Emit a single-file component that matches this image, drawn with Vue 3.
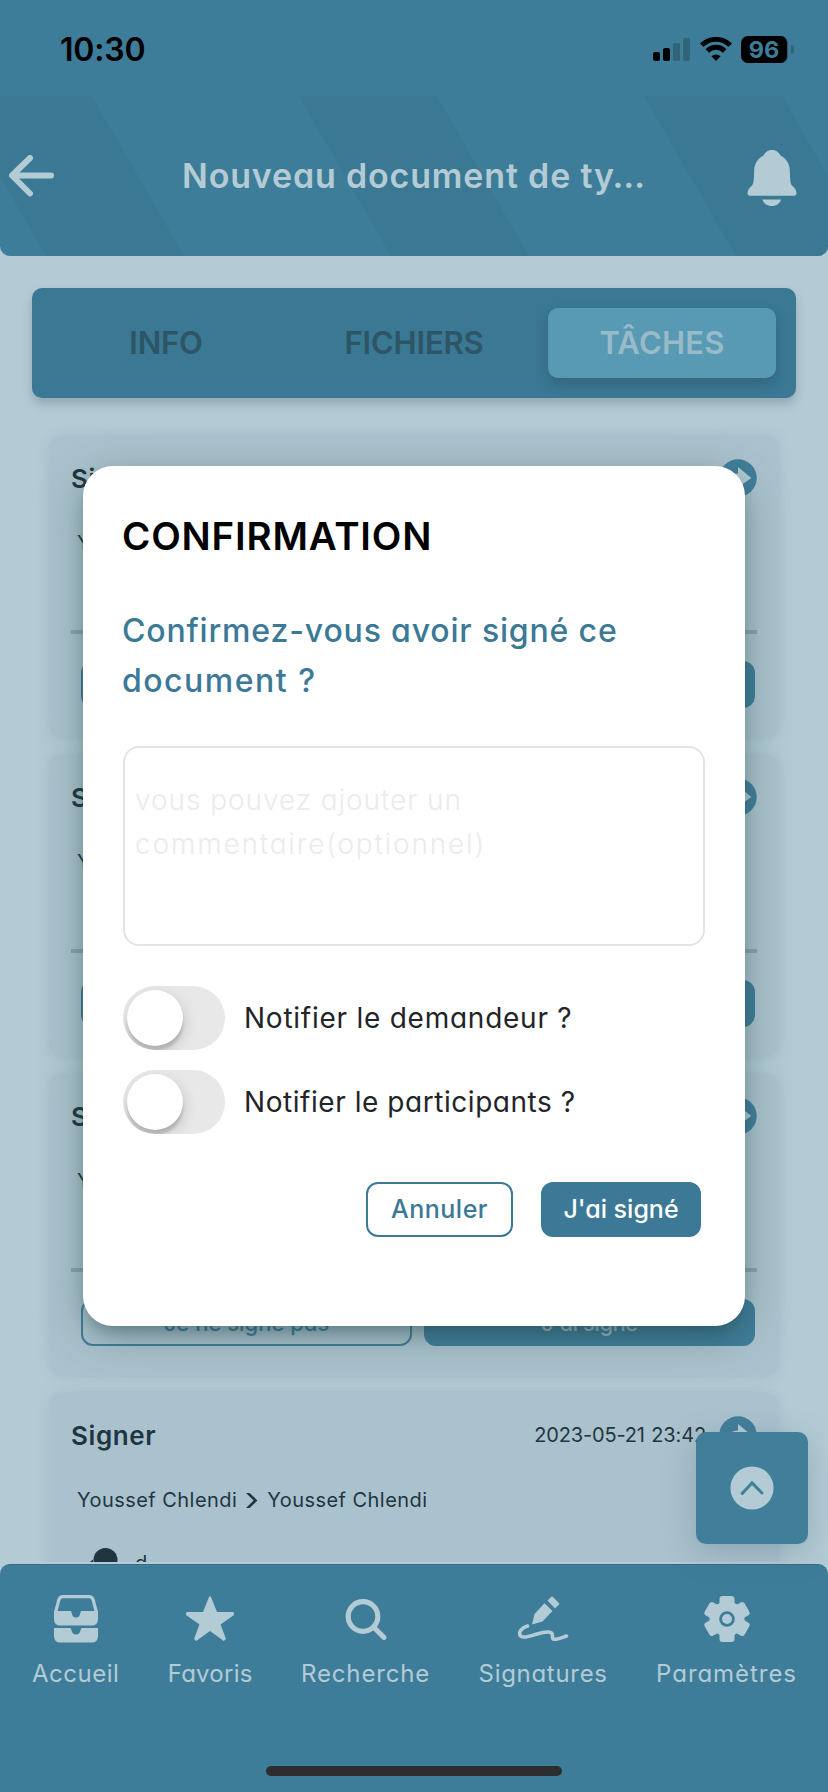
<script setup>
import { ref } from 'vue'

const tabs = [
  { id: 'info', label: 'INFO' },
  { id: 'files', label: 'FICHIERS' },
  { id: 'tasks', label: 'TÂCHES' },
]
const activeTab = ref('tasks')

const cards = [1, 2, 3, 4].map((id) => ({
  id,
  title: 'Signer',
  date: '2023-05-21 23:42',
  from: 'Youssef Chlendi',
  to: 'Youssef Chlendi',
  comment: id === 4 ? 'd' : '',
}))

const toggles = [
  { id: 'asker', label: 'Notifier le demandeur ?' },
  { id: 'members', label: 'Notifier le participants ?' },
]

const nav = [
  { id: 'home', label: 'Accueil' },
  { id: 'star', label: 'Favoris' },
  { id: 'search', label: 'Recherche' },
  { id: 'sign', label: 'Signatures' },
  { id: 'gear', label: 'Paramètres' },
]
</script>

<template>
  <div class="screen">
    <div class="status">
      <span class="time">10:30</span>
      <div class="status-icons">
        <svg class="signal" width="38" height="24" viewBox="0 0 38 24">
          <rect x="0" y="14" width="7" height="9" rx="2" />
          <rect x="10" y="10" width="7" height="13" rx="2" />
          <rect class="dim" x="20" y="5" width="7" height="18" rx="2" />
          <rect class="dim" x="30" y="0" width="7" height="23" rx="2" />
        </svg>
        <svg class="wifi" width="32" height="24" viewBox="0 0 32 24">
          <path d="M1.8 8.2a20.2 20.2 0 0 1 28.4 0" />
          <path d="M7.3 13.9a12.3 12.3 0 0 1 17.4 0" />
          <path class="tip" d="M16 24l-4.6-4.7a6.6 6.6 0 0 1 9.2 0z" />
        </svg>
        <div class="battery"><span>96</span></div>
        <i class="cap"></i>
      </div>
    </div>

    <header class="header">
      <svg class="stripes" width="828" height="160" viewBox="0 0 828 160">
        <path d="M-46 0H92L184 160H46zM299 0H437L529 160H391zM644 0H782L874 160H736z" />
      </svg>
      <svg class="back" width="46" height="42" viewBox="0 0 46 42">
        <path d="M22 3 4 20.500l18 18M4.500 20.500h38.500" />
      </svg>
      <h1>Nouveau document de ty…</h1>
      <svg class="bell" width="50" height="56" viewBox="0 0 50 56">
        <path d="M25 0c4.500 0 7 2.500 8.500 5.500C39.500 8.500 42.500 14 42.800 20c.3 8 .2 13 2.200 15.500 2.500 2.500 4.500 4 4.500 7.500 0 2-1.500 2.800-3.500 2.800H4c-2 0-3.500-.8-3.500-2.800 0-3.500 2-5 4.500-7.500C7 33 6.900 28 7.200 20 7.500 14 10.500 8.500 16.500 5.500 18 2.500 20.500 0 25 0z" />
        <path d="M15.500 49.500h18.500c-1 4-4.500 6.500-9.200 6.500s-8.300-2.500-9.300-6.500z" />
      </svg>
    </header>

    <main class="main">
      <div class="tabs">
        <button v-for="t in tabs" :key="t.id" class="tab" :class="{ active: t.id === activeTab }">
          {{ t.label }}
        </button>
      </div>

      <section class="cards">
        <article v-for="c in cards" :key="c.id" class="card">
          <div class="card-head">
            <span class="card-title">{{ c.title }}</span>
            <span class="card-date">{{ c.date }}</span>
            <svg class="go" width="38" height="38" viewBox="0 0 38 38">
              <circle cx="19" cy="19" r="18.700" />
              <path d="M19 8v6.500C11 15 7.500 19 7 25c3-3.500 7-4.500 12-4.300v7.800L32.300 19z" />
            </svg>
          </div>
          <div class="people">
            <span>{{ c.from }}</span>
            <svg width="12" height="15" viewBox="0 0 12 15"><path d="M0 0H3.600L11.500 7.500 3.600 15H0L7.600 7.500z" /></svg>
            <span>{{ c.to }}</span>
          </div>
          <div class="note">
            <template v-if="c.comment">
              <svg width="28" height="28" viewBox="0 0 28 28">
                <circle cx="15.500" cy="12" r="12" />
                <path d="M0 14l3-2.500v14H0z" />
              </svg>
              <span>{{ c.comment }}</span>
            </template>
          </div>
          <div class="card-actions">
            <button class="ghost">Je ne signe pas</button>
            <button class="solid">J'ai signé</button>
          </div>
        </article>
      </section>
    </main>

    <nav class="nav">
      <div class="nav-items">
        <a v-for="n in nav" :key="n.id" class="nav-item" :class="n.id">
          <svg v-if="n.id === 'home'" width="46" height="48" viewBox="0 0 46 48">
            <path class="line" d="M2.500 17.500 5.800 5Q6.700 1.600 10 1.600H36Q39.300 1.600 40.200 5L43.500 17.500" />
            <path d="M1 16H17.500q.8 0 1 1.200C19 20.500 20.300 22.500 23 22.500s4-2 4.500-5.300q.2-1.200 1-1.200H45V24q0 6.600-6.600 6.600H7.600Q1 30.600 1 24zM1 33H17q1 0 1.200 1.200C18.800 37.800 20.200 39.500 23 39.500s4.200-1.700 4.800-5.300Q28 33 29 33H45v8q0 6.600-6.600 6.600H7.600Q1 47.600 1 41z" />
          </svg>
          <svg v-else-if="n.id === 'star'" width="48" height="45" viewBox="0 0 48 45">
            <path d="M23.200 0h1.600L31 15.500 47.500 15.500 48 18.500 34.500 28 40 42.500 37.800 44.500 24 34.500 10.200 44.500 8 42.500 13.500 28 0 18.500.5 15.500 17 15.500z" />
          </svg>
          <svg v-else-if="n.id === 'search'" width="44" height="44" viewBox="0 0 44 44">
            <circle class="line thick" cx="19" cy="19.500" r="14.800" />
            <path class="line thick" d="M30 30.500 40 40.500" />
          </svg>
          <svg v-else-if="n.id === 'sign'" width="50" height="45" viewBox="0 0 50 45">
            <path d="M29.500 4 33 .5q1-.8 2 0L41 6.500q.6.800 0 1.500L37 12zM26.500 6.700 34.500 14.500 24.500 25 14 28 16.500 17.500z" />
            <path class="line pen" d="M9.500 29.500C3 31.500.8 35.500 2 38.500c1.500 4.500 12 .5 17-1 6-1.800 12-3 14.500-1s-1 6 3 6.300c3.500.2 8-2 12-3.300" />
          </svg>
          <svg v-else width="46" height="46" viewBox="0 0 46 46">
            <circle cx="23" cy="23" r="17.500" />
            <rect x="15.500" y="0" width="15" height="46" rx="3" />
            <rect x="15.500" y="0" width="15" height="46" rx="3" transform="rotate(60 23 23)" />
            <rect x="15.500" y="0" width="15" height="46" rx="3" transform="rotate(120 23 23)" />
            <circle class="ring" cx="23" cy="23" r="6.400" />
          </svg>
          <span>{{ n.label }}</span>
        </a>
      </div>
      <div class="indicator"></div>
    </nav>

    <button class="fab">
      <svg width="44" height="44" viewBox="0 0 44 44">
        <circle cx="22" cy="22" r="21.600" />
        <path d="M12.200 27.500 22 17 32 27" />
      </svg>
    </button>

    <div class="modal">
      <h2>CONFIRMATION</h2>
      <p class="question"><span class="q1">Confirmez-vous avoir signé ce</span><br /><span class="q2">document ?</span></p>
      <div class="comment">
        <span class="c1">vous pouvez ajouter un</span><br /><span class="c2">commentaire(optionnel)</span>
      </div>
      <div class="toggles">
        <label v-for="t in toggles" :key="t.id" class="toggle" :class="t.id">
          <span class="switch"><i></i></span>
          <span class="toggle-label">{{ t.label }}</span>
        </label>
      </div>
      <div class="modal-actions">
        <button class="cancel">Annuler</button>
        <button class="confirm">J'ai signé</button>
      </div>
    </div>
  </div>
</template>

<style>
html,
body {
  margin: 0;
  background: #b3cbd5;
}
</style>

<style scoped>
* {
  box-sizing: border-box;
}
.screen {
  position: relative;
  display: flex;
  flex-direction: column;
  width: 828px;
  height: 1792px;
  overflow: hidden;
  background: #b3cbd5;
  font-family: Inter, "Liberation Sans", sans-serif;
  font-feature-settings: "cv11";
}
button {
  margin: 0;
  padding: 0;
  border: 0;
  background: none;
  font: inherit;
  font-feature-settings: inherit;
  white-space: nowrap;
}
svg {
  display: block;
  flex: none;
}

/* status bar */
.status {
  display: flex;
  justify-content: space-between;
  height: 96px;
  padding: 0 34px 0 60px;
  background: #3e7d99;
}
.time {
  margin-top: 30px;
  color: #000;
  font-size: 32px;
  font-weight: 600;
  line-height: 40px;
  letter-spacing: -0.200px;
  font-feature-settings: normal;
}
.status-icons {
  display: flex;
  align-items: flex-start;
}
.signal {
  margin-top: 38px;
}
.dim {
  fill: #306479;
}
.wifi {
  margin: 37px 0 0 9px;
  fill: none;
  stroke: #000;
  stroke-width: 5;
}
.wifi .tip {
  fill: #000;
  stroke: none;
}
.battery {
  width: 47px;
  height: 27px;
  margin: 36px 0 0 9px;
  border-right: 1px solid #2c5d72;
  border-radius: 7px;
  background: #000;
  color: #3e7d99;
  font-size: 23.500px;
  font-weight: 700;
  line-height: 28px;
  text-align: center;
}
.cap {
  width: 3px;
  height: 9px;
  margin: 45px 0 0 3px;
  border-radius: 0 4px 4px 0;
  background: #306479;
}

/* header */
.header {
  position: relative;
  display: flex;
  align-items: center;
  height: 160px;
  flex: none;
  overflow: hidden;
  border-radius: 0 0 10px 10px;
  background: #3e7d99;
}
.stripes {
  position: absolute;
  inset: 0;
  fill: #3a7894;
}
.back {
  position: relative;
  margin: 0 0 0 8px;
  fill: none;
  stroke: #b3cbd5;
  stroke-width: 6;
  stroke-linecap: round;
  stroke-linejoin: round;
}
.header h1 {
  position: relative;
  width: 563px;
  margin: 0 0 0 128px;
  color: #b3cbd5;
  font-size: 34px;
  font-weight: 600;
  line-height: 40px;
  letter-spacing: 0.830px;
  white-space: nowrap;
}
.bell {
  position: relative;
  margin: 4px 0 0 2px;
  fill: #b3cbd5;
}

/* content */
.main {
  height: 1306px;
  flex: none;
  overflow: hidden;
  padding: 32px 32px 0;
}
.tabs {
  display: grid;
  grid-template-columns: repeat(3, 228px);
  justify-content: center;
  align-items: center;
  gap: 20px;
  height: 110px;
  border-radius: 10px;
  background: #3a7894;
  box-shadow: 0 6px 10px rgba(50, 70, 80, 0.25);
}
.tab {
  height: 70px;
  border-radius: 10px;
  color: #2d5565;
  font-size: 31px;
  font-weight: 600;
  line-height: 70px;
  letter-spacing: -0.200px;
}
.tab.active {
  background: #5899b4;
  color: #98bac9;
  letter-spacing: 0.200px;
  box-shadow: 0 6px 12px rgba(40, 70, 80, 0.35);
}
.cards {
  display: flex;
  flex-direction: column;
  gap: 17px;
  margin: 38px 18px 0;
}
.card {
  height: 302px;
  flex: none;
  padding: 20px 21px 0;
  border-radius: 12px;
  background: #aac2cd;
  box-shadow: 0 0 12px rgba(140, 165, 178, 0.42);
  color: #1f3641;
}
.card-head {
  display: flex;
  align-items: center;
  height: 44px;
}
.card-title {
  font-size: 26px;
  font-weight: 600;
  letter-spacing: 0.600px;
}
.card-date {
  margin: 0 13px 0 auto;
  font-size: 20px;
  letter-spacing: -0.150px;
  word-spacing: 1px;
}
.go circle {
  fill: #417e9a;
}
.go path {
  fill: #b3cbd5;
}
.people {
  display: flex;
  align-items: center;
  gap: 9px;
  height: 30px;
  margin: 28px 0 0 6px;
  font-size: 20px;
  letter-spacing: 0.450px;
}
.people svg,
.note svg {
  fill: #1f3641;
}
.note {
  display: flex;
  gap: 17px;
  height: 72px;
  padding: 33px 0 0 19px;
  font-size: 20px;
  line-height: 30px;
}
.card-actions {
  display: grid;
  grid-template-columns: 1fr 1fr;
  gap: 12px;
  padding: 27px 2px 0 10px;
  border-top: 4px solid #8ba3ac;
}
.card-actions button {
  height: 47px;
  border: 2px solid #3f7d99;
  border-radius: 12px;
  color: #3f7d99;
  font-size: 22px;
  font-weight: 500;
  line-height: 42px;
}
.card-actions .solid {
  background: #3f7d99;
  color: #a3bdc8;
  letter-spacing: -0.500px;
}

/* bottom navigation */
.nav {
  height: 228px;
  margin-top: 2px;
  padding-top: 30px;
  border-top: 1px solid #356e88;
  border-radius: 10px 10px 0 0;
  background: #3e7d99;
}
.nav-items {
  display: flex;
  justify-content: space-between;
  padding: 0 31px 0 32px;
}
.nav-item {
  display: flex;
  flex-direction: column;
  align-items: center;
  color: #b3cbd5;
  fill: #b3cbd5;
}
.nav-item svg {
  height: 48px;
  overflow: visible;
}
.nav-item span {
  margin-top: 15px;
  font-size: 24px;
  font-weight: 400;
  line-height: 32px;
  white-space: nowrap;
}
.home span {
  letter-spacing: 0.500px;
}
.star span {
  letter-spacing: 0.250px;
}
.search span {
  letter-spacing: 0.850px;
}
.sign span {
  letter-spacing: 0.700px;
}
.gear span {
  letter-spacing: 0.950px;
}
.line {
  fill: none;
  stroke: #b3cbd5;
  stroke-width: 3.200;
}
.thick {
  stroke-width: 5.200;
  stroke-linecap: round;
}
.pen {
  stroke-width: 3.600;
  stroke-linecap: round;
}
.ring {
  fill: #b3cbd5;
  stroke: #3e7d99;
  stroke-width: 2.800;
}
.indicator {
  width: 296px;
  height: 10px;
  margin: 76px auto 0;
  border-radius: 5px;
  background: #2d2d2d;
}

/* scroll-to-top button */
.fab {
  position: absolute;
  left: 696px;
  top: 1432px;
  display: grid;
  place-items: center;
  width: 112px;
  height: 112px;
  border-radius: 10px;
  background: #417e9a;
  box-shadow: 0 8px 32px rgba(60, 95, 105, 0.28);
}
.fab circle {
  fill: #b3cbd5;
}
.fab path {
  fill: none;
  stroke: #417e9a;
  stroke-width: 3;
  stroke-linecap: round;
}

/* dialog */
.modal {
  position: absolute;
  left: 83px;
  top: 466px;
  display: flex;
  flex-direction: column;
  width: 662px;
  height: 860px;
  padding: 45px 40px 0;
  border-radius: 30px;
  background: #fff;
  box-shadow: 0 10px 18px -6px rgba(20, 50, 60, 0.4), 0 10px 44px rgba(40, 75, 70, 0.34);
}
.modal h2 {
  margin: 0 0 0 -1px;
  color: #000;
  font-size: 38.500px;
  font-weight: 600;
  line-height: 50px;
  letter-spacing: 0.800px;
}
.question {
  margin: 45px 0 0 -1px;
  color: #3b7997;
  font-size: 32px;
  font-weight: 500;
  line-height: 50px;
  white-space: nowrap;
}
.q1 {
  letter-spacing: 0.830px;
}
.q2 {
  letter-spacing: 1.500px;
}
.comment {
  height: 200px;
  margin-top: 40px;
  padding: 30px 10px;
  border: 2px solid #e4e4e4;
  border-radius: 16px;
  color: #ebebeb;
  font-size: 28px;
  font-weight: 300;
  line-height: 44px;
  white-space: nowrap;
}
.c1 {
  letter-spacing: 0.950px;
}
.c2 {
  letter-spacing: 1.820px;
}
.toggles {
  display: flex;
  flex-direction: column;
  gap: 20px;
  margin-top: 40px;
}
.toggle {
  display: flex;
  align-items: center;
  gap: 19px;
}
.switch {
  width: 102px;
  height: 64px;
  overflow: hidden;
  padding: 4px;
  border-radius: 32px;
  background: #e8e8e8;
}
.switch i {
  display: block;
  width: 56px;
  height: 56px;
  border-radius: 50%;
  background: #fff;
  box-shadow: 0 5px 3px rgba(0, 0, 0, 0.15), 2px 5px 14px rgba(0, 0, 0, 0.14);
}
.toggle-label {
  color: #222428;
  font-size: 28px;
  line-height: 40px;
  white-space: nowrap;
}
.asker .toggle-label {
  letter-spacing: 0.750px;
}
.members .toggle-label {
  letter-spacing: 0.550px;
}
.modal-actions {
  display: flex;
  justify-content: flex-end;
  gap: 28px;
  margin: 48px 4px 0 0;
}
.modal-actions button {
  height: 55px;
  border: 2px solid #3b7997;
  border-radius: 12px;
  font-size: 25px;
  font-weight: 500;
  line-height: 51px;
}
.cancel {
  width: 147px;
  color: #3b7997;
  letter-spacing: 0.500px;
}
.modal-actions .confirm {
  width: 160px;
  background: #3b7997;
  color: #fff;
}
</style>
